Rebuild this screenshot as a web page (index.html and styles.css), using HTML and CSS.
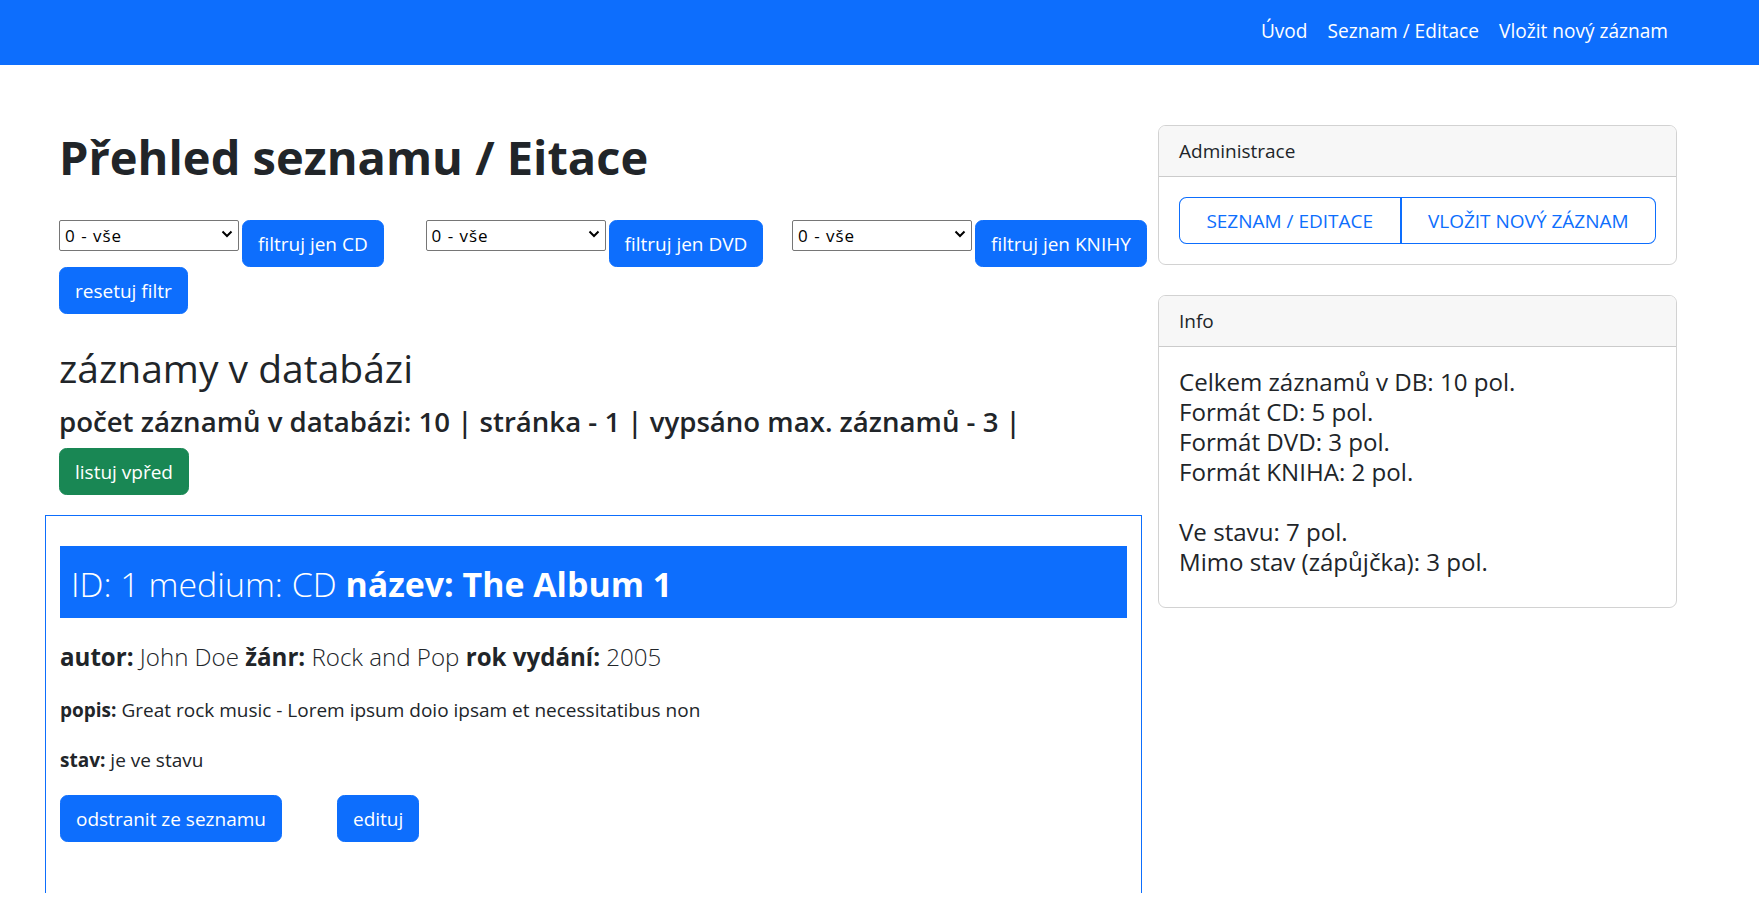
FILE: index.html
```html
<!DOCTYPE html>
<html lang="cs">
<head>
<meta charset="utf-8">
<title>Přehled seznamu / Eitace</title>
<link rel="stylesheet" href="styles.css">
</head>
<body>
<div class="viewport">
  <nav class="navbar">
    <ul class="nav">
      <li><a class="nav-link" href="#">Úvod</a></li>
      <li><a class="nav-link" href="#">Seznam / Editace</a></li>
      <li><a class="nav-link" href="#">Vložit nový záznam</a></li>
    </ul>
  </nav>

  <div class="layout">
    <main class="main">
      <div class="intro">
        <h1 class="title">Přehled seznamu / Eitace</h1>

        <div class="filters">
          <form class="filter">
            <div class="select"><span class="select-text">0 - vše</span><svg class="chev" width="12" height="8" viewBox="0 0 12 8"><polyline points="1.5,1.5 6,6 10.5,1.5" fill="none" stroke="#000" stroke-width="2"/></svg></div>
            <button class="btn btn-primary" type="button">filtruj jen CD</button>
          </form>
          <form class="filter">
            <div class="select"><span class="select-text">0 - vše</span><svg class="chev" width="12" height="8" viewBox="0 0 12 8"><polyline points="1.5,1.5 6,6 10.5,1.5" fill="none" stroke="#000" stroke-width="2"/></svg></div>
            <button class="btn btn-primary" type="button">filtruj jen DVD</button>
          </form>
          <form class="filter">
            <div class="select"><span class="select-text">0 - vše</span><svg class="chev" width="12" height="8" viewBox="0 0 12 8"><polyline points="1.5,1.5 6,6 10.5,1.5" fill="none" stroke="#000" stroke-width="2"/></svg></div>
            <button class="btn btn-primary" type="button">filtruj jen KNIHY</button>
          </form>
          <form class="filter">
            <button class="btn btn-primary" type="button">resetuj filtr</button>
          </form>
        </div>

        <h2 class="section-title">záznamy v databázi</h2>
        <h4 class="stats">počet záznamů v databázi: 10 | stránka - 1 | vypsáno max. záznamů - 3 |</h4>
        <button class="btn btn-success" type="button">listuj vpřed</button>
      </div>

      <div class="record">
        <h3 class="record-head">ID: 1 medium: CD <b>název: The Album 1</b></h3>
        <p class="lead"><b>autor:</b> John Doe <b>žánr:</b> Rock and Pop <b>rok vydání:</b> 2005</p>
        <p class="para"><b>popis:</b> Great rock music - Lorem ipsum doio ipsam et necessitatibus non</p>
        <p class="para"><b>stav:</b> je ve stavu</p>
        <div class="actions">
          <button class="btn btn-primary" type="button">odstranit ze seznamu</button>
          <button class="btn btn-primary" type="button">edituj</button>
        </div>
      </div>
    </main>

    <aside class="side">
      <section class="card">
        <div class="card-header">Administrace</div>
        <div class="card-body">
          <div class="btn-group">
            <a class="btn-outline first" href="#">Seznam / Editace</a>
            <a class="btn-outline last" href="#">Vložit nový záznam</a>
          </div>
        </div>
      </section>
      <section class="card">
        <div class="card-header">Info</div>
        <div class="card-body">
          <h5 class="info">Celkem záznamů v DB: 10 pol.<br>Formát CD: 5 pol.<br>Formát DVD: 3 pol.<br>Formát KNIHA: 2 pol.<br><br>Ve stavu: 7 pol.<br>Mimo stav (zápůjčka): 3 pol.</h5>
        </div>
      </section>
    </aside>
  </div>
</div>
</body>
</html>
```

FILE: styles.css
```css
* { box-sizing: border-box; }

html, body {
  margin: 0;
  padding: 0;
  background: #fff;
}

body {
  font-family: "Open Sans", "Noto Sans", sans-serif;
  font-size: 19px;
  line-height: 30px;
  color: #212529;
}

.viewport {
  height: 893px;
  overflow: hidden;
}

/* navbar */
.navbar {
  height: 65px;
  background: #0d6efd;
  display: flex;
  justify-content: flex-end;
  align-items: flex-start;
  padding: 16px 81px 0 0;
}

.nav {
  list-style: none;
  margin: 0;
  padding: 0;
  display: flex;
}

.nav-link {
  display: block;
  padding: 0 10px;
  color: #fff;
  text-decoration: none;
  line-height: 30px;
  font-size: 19.1px;
}

/* layout */
.layout {
  display: grid;
  grid-template-columns: 1097px 519px;
  column-gap: 16px;
  padding-left: 45px;
  align-items: start;
}

.intro {
  padding-left: 14px;
}

.title {
  margin: 64px 0 35px;
  font-size: 47px;
  line-height: 56px;
  font-weight: 700;
}

/* filters */
.filters {
  display: grid;
  grid-template-columns: repeat(3, 366.5px);
  margin-bottom: 30px;
}

.filter {
  margin: 0;
  display: flex;
  align-items: flex-start;
  gap: 3px;
  white-space: nowrap;
}

.select {
  width: 180px;
  height: 31px;
  border: 1px solid #767676;
  border-radius: 2px;
  background: #fff;
  display: flex;
  align-items: center;
  justify-content: space-between;
  padding: 1px 5px 0 5px;
  font-size: 17px;
  letter-spacing: 1px;
  line-height: 28px;
  color: #000;
}

.chev {
  display: block;
  margin-top: -4px;
}

/* buttons */
.btn {
  display: inline-block;
  font-family: inherit;
  font-size: 19px;
  line-height: 30px;
  padding: 7.5px 15px;
  border: 1px solid transparent;
  border-radius: 7.5px;
  color: #fff;
  cursor: pointer;
  white-space: nowrap;
}

.btn-primary {
  background: #0d6efd;
  border-color: #0d6efd;
}

.btn-success {
  background: #198754;
  border-color: #198754;
  margin-top: 9px;
}

/* headings */
.section-title {
  margin: 0;
  font-size: 39px;
  line-height: 48px;
  font-weight: 500;
}

.stats {
  margin: 11px 0 0;
  font-size: 27.6px;
  line-height: 36px;
  font-weight: 600;
  white-space: nowrap;
}

/* record card */
.record {
  margin-top: 20px;
  border: 1px solid #0d6efd;
  padding: 30px 14px 0;
  min-height: 600px;
}

.record-head {
  margin: 0;
  background: #0d6efd;
  color: #fff;
  font-size: 33.9px;
  line-height: 42px;
  padding: 17px 11px 13px;
  font-weight: 300;
}

.record-head b {
  font-weight: 700;
}

.lead {
  margin: 21px 0 20px;
  font-size: 24.1px;
  line-height: 36px;
  font-weight: 300;
}

.lead b,
.para b {
  font-weight: 700;
}

.para {
  margin: 0 0 20px;
}

.actions {
  display: flex;
  gap: 55px;
}

/* sidebar */
.side {
  padding-top: 60px;
}

.card {
  border: 1px solid rgba(0, 0, 0, 0.175);
  border-radius: 7.5px;
  overflow: hidden;
  margin-bottom: 30px;
}

.card-header {
  background: #f7f7f7;
  padding: 10px 20px;
  border-bottom: 1px solid rgba(0, 0, 0, 0.175);
}

.card-body {
  padding: 20px;
}

.btn-group {
  display: flex;
}

.btn-outline {
  flex: 1 1 auto;
  text-align: center;
  text-transform: uppercase;
  color: #0d6efd;
  text-decoration: none;
  border: 1px solid #0d6efd;
  padding: 7.5px 15px;
  line-height: 30px;
  white-space: nowrap;
}

.btn-outline.first {
  border-radius: 7.5px 0 0 7.5px;
  border-right-width: 2px;
}

.btn-outline.last {
  border-radius: 0 7.5px 7.5px 0;
  border-left-width: 0;
}

.info {
  margin: 0 0 10px;
  font-size: 24.1px;
  line-height: 30px;
  font-weight: 500;
}
```
